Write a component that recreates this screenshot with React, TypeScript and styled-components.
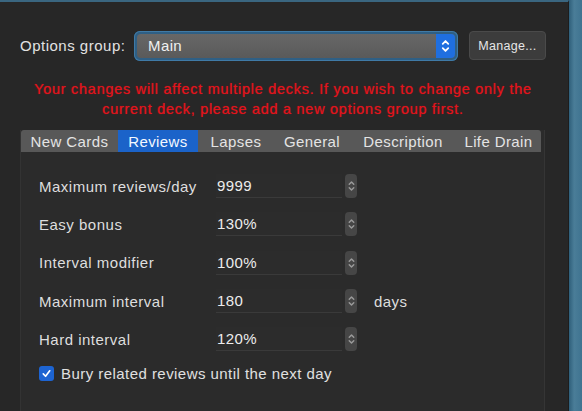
import React from "react";
import styled, { createGlobalStyle } from "styled-components";

const GlobalStyle = createGlobalStyle`
  html, body { margin: 0; padding: 0; background: #262626; }
  body { font-family: "Liberation Sans", Arial, sans-serif; -webkit-font-smoothing: antialiased; }
  * { box-sizing: border-box; }
`;

const Screen = styled.div`
  display: flex;
  width: 582px;
  height: 411px;
  overflow: hidden;
  background: #262626;
`;

const Window = styled.div`
  flex: 1;
  display: flex;
  flex-direction: column;
  background: #272727;
  border-top: 2px solid #3a6680;
  border-right: 1px solid #1d1d1d;
  padding: 0 0 0 20px;
`;

const Desktop = styled.div`
  width: 13px;
  background: linear-gradient(90deg, #2f5f7a, #4a7d98 40%, #3f7390);
`;

const HeaderRow = styled.div`
  display: flex;
  align-items: center;
  margin-top: 28px;
  height: 31px;
`;

const Label = styled.span`
  color: #e2e2e2;
  font-size: 15px;
  letter-spacing: 0.5px;
  width: 114px;
`;

const Select = styled.div`
  width: 324px;
  height: 30px;
  border-radius: 6px;
  padding: 3px;
  background: #2f5f84;
  box-shadow: 0 0 0 1px #3f7aa6 inset;
  display: flex;
`;

const SelectInner = styled.div`
  flex: 1;
  display: flex;
  align-items: center;
  border-radius: 4px;
  background: linear-gradient(#676767, #5a5a5a);
  padding-left: 11px;
  color: #f0f0f0;
  font-size: 15px;
  letter-spacing: 0.4px;
`;

const SelectValue = styled.span`
  flex: 1;
`;

const BlueStepper = styled.div`
  width: 19px;
  height: 100%;
  background: #1f6fe0;
  border-radius: 0 4px 4px 0;
  display: flex;
  align-items: center;
  justify-content: center;
`;

const ManageButton = styled.div`
  margin-left: 11px;
  width: 77px;
  height: 29px;
  border-radius: 4px;
  background: #3c3c3c;
  border: 1px solid #4a4a4a;
  color: #e6e6e6;
  font-size: 12.5px;
  letter-spacing: 0.3px;
  display: flex;
  align-items: center;
  justify-content: center;
`;

const Warning = styled.div`
  margin-top: 18px;
  width: 526px;
  text-align: center;
  color: #e3141c;
  font-size: 14.5px;
  line-height: 20px;
  letter-spacing: 0.72px;
  white-space: nowrap;
  text-shadow: 0 0 1px rgba(230, 20, 28, 0.7);
`;

const Panel = styled.div`
  margin-top: 11px;
  width: 525px;
  flex: 1;
  display: flex;
  flex-direction: column;
  background: #2b2b2b;
  border-left: 1px solid #333;
  border-right: 1px solid #353535;
`;

const TabBar = styled.div`
  display: flex;
  align-items: center;
  width: 520px;
  height: 22px;
  background: #585858;
  border-radius: 3px 3px 0 0;
`;

const Tab = styled.div<{ $active?: boolean; $w: number }>`
  width: ${(p) => p.$w}px;
  height: 100%;
  display: flex;
  align-items: center;
  justify-content: center;
  font-size: 15px;
  letter-spacing: 0.4px;
  color: ${(p) => (p.$active ? "#f4f8ff" : "#e4e4e4")};
  background: ${(p) => (p.$active ? "#1b63c9" : "transparent")};
`;

const Form = styled.div`
  display: flex;
  flex-direction: column;
  padding: 15px 0 0 18px;
`;

const Row = styled.div`
  display: flex;
  align-items: center;
  height: 38.3px;
`;

const RowLabel = styled.span`
  width: 177px;
  color: #dedede;
  font-size: 15px;
  letter-spacing: 0.5px;
`;

const Field = styled.div`
  width: 126px;
  height: 24px;
  display: flex;
  align-items: center;
  color: #ececec;
  font-size: 15px;
  letter-spacing: 0.4px;
  padding-left: 1px;
  border-bottom: 1px solid #3a3a3a;
  background: #2c2c2c;
`;

const Stepper = styled.div`
  margin-left: 3px;
  width: 12px;
  height: 24px;
  border-radius: 4px;
  background: #464646;
  display: flex;
  align-items: center;
  justify-content: center;
`;

const Unit = styled.span`
  margin-left: 17px;
  color: #dedede;
  font-size: 15px;
  letter-spacing: 0.4px;
`;

const CheckRow = styled.div`
  display: flex;
  align-items: center;
  margin-top: 7px;
  gap: 7px;
`;

const Check = styled.div`
  width: 15px;
  height: 15px;
  border-radius: 3px;
  background: #1d64d2;
  display: flex;
  align-items: center;
  justify-content: center;
`;

const CheckText = styled.span`
  color: #e0e0e0;
  font-size: 15px;
  letter-spacing: 0.45px;
`;

const Chevrons = ({ color, w, h }: { color: string; w: number; h: number }) => (
  <svg width={w} height={h} viewBox="0 0 10 18" fill="none" stroke={color} strokeWidth={1.6} strokeLinecap="round" strokeLinejoin="round">
    <polyline points="2.5,7 5,4.5 7.5,7" />
    <polyline points="2.5,11 5,13.5 7.5,11" />
  </svg>
);

const tabs: [string, number][] = [
  ["New Cards", 97],
  ["Reviews", 80],
  ["Lapses", 76],
  ["General", 76],
  ["Description", 106],
  ["Life Drain", 85],
];

const rows: [string, string, string?][] = [
  ["Maximum reviews/day", "9999"],
  ["Easy bonus", "130%"],
  ["Interval modifier", "100%"],
  ["Maximum interval", "180", "days"],
  ["Hard interval", "120%"],
];

export default function App() {
  return (
    <>
      <GlobalStyle />
      <Screen>
        <Window>
          <HeaderRow>
            <Label>Options group:</Label>
            <Select>
              <SelectInner>
                <SelectValue>Main</SelectValue>
                <BlueStepper>
                  <Chevrons color="#fff" w={11} h={20} />
                </BlueStepper>
              </SelectInner>
            </Select>
            <ManageButton>Manage...</ManageButton>
          </HeaderRow>
          <Warning>
            Your changes will affect multiple decks. If you wish to change only the
            <br />
            current deck, please add a new options group first.
          </Warning>
          <Panel>
            <TabBar>
              {tabs.map(([t, w]) => (
                <Tab key={t} $w={w} $active={t === "Reviews"}>
                  {t}
                </Tab>
              ))}
            </TabBar>
            <Form>
              {rows.map(([l, v, u]) => (
                <Row key={l}>
                  <RowLabel>{l}</RowLabel>
                  <Field>{v}</Field>
                  <Stepper>
                    <Chevrons color="#9a9a9a" w={9} h={18} />
                  </Stepper>
                  {u && <Unit>{u}</Unit>}
                </Row>
              ))}
              <CheckRow>
                <Check>
                  <svg width="11" height="11" viewBox="0 0 12 12" fill="none" stroke="#fff" strokeWidth={1.8} strokeLinecap="round" strokeLinejoin="round">
                    <polyline points="2.5,6.5 5,9 9.5,3" />
                  </svg>
                </Check>
                <CheckText>Bury related reviews until the next day</CheckText>
              </CheckRow>
            </Form>
          </Panel>
        </Window>
        <Desktop />
      </Screen>
    </>
  );
}
